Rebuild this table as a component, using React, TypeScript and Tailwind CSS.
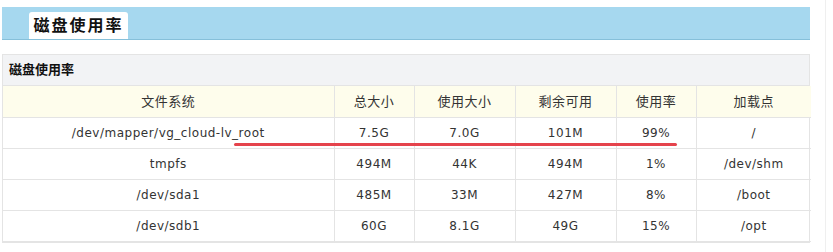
const headers = ['文件系统', '总大小', '使用大小', '剩余可用', '使用率', '加载点'];

const rows = [
  ['/dev/mapper/vg_cloud-lv_root', '7.5G', '7.0G', '101M', '99%', '/'],
  ['tmpfs', '494M', '44K', '494M', '1%', '/dev/shm'],
  ['/dev/sda1', '485M', '33M', '427M', '8%', '/boot'],
  ['/dev/sdb1', '60G', '8.1G', '49G', '15%', '/opt'],
];

const widths = ['w-[331px]', 'w-[80px]', 'w-[101px]', 'w-[101px]', 'w-[80px]', 'w-[115px]'];

export default function App() {
  return (
    <div
      className="relative w-[833px] h-[252px] bg-white text-[#333]"
      style={{ fontFamily: '"DejaVu Sans", "Noto Sans CJK SC", sans-serif' }}
    >
      <div className="w-[826px] h-full border-r border-[#efefef] pl-[2px] pt-[7px]">
        <div className="w-[808px] h-[33px] bg-[#a6d8ef] border-b border-[#86c0da] flex items-end pl-[27px]">
          <div className="w-[99px] h-[27px] bg-white rounded-t-[3px] flex items-center justify-center text-[16px] font-bold text-[#111] tracking-[2px]">
            磁盘使用率
          </div>
        </div>

        <div className="mt-[14px] w-[808px] border border-[#e4e4e4]">
          <div className="h-[31px] bg-[#f2f3f5] flex items-center pl-[6px] text-[13px] font-bold text-[#111] border-b border-[#e4e4e4]">
            磁盘使用率
          </div>
          <table className="w-full border-collapse table-fixed text-[12px]">
            <thead>
              <tr className="h-[31px] bg-[#fefdec]">
                {headers.map((h, i) => (
                  <th
                    key={h}
                    className={`${widths[i]} font-normal text-[13px] text-center tracking-[0.5px] border-l border-b border-[#e4e4e4] first:border-l-0`}
                  >
                    {h}
                  </th>
                ))}
              </tr>
            </thead>
            <tbody>
              {rows.map((r) => (
                <tr key={r[0]} className="h-[31px]">
                  {r.map((c, i) => (
                    <td
                      key={i}
                      className="text-center tracking-[0.5px] border-l border-b border-[#e4e4e4] first:border-l-0"
                    >
                      {c}
                    </td>
                  ))}
                </tr>
              ))}
            </tbody>
          </table>
        </div>
      </div>

      <div className="absolute left-[234px] top-[143px] w-[443px] h-[3px] bg-[#e5434c] rounded-full" />
    </div>
  );
}
